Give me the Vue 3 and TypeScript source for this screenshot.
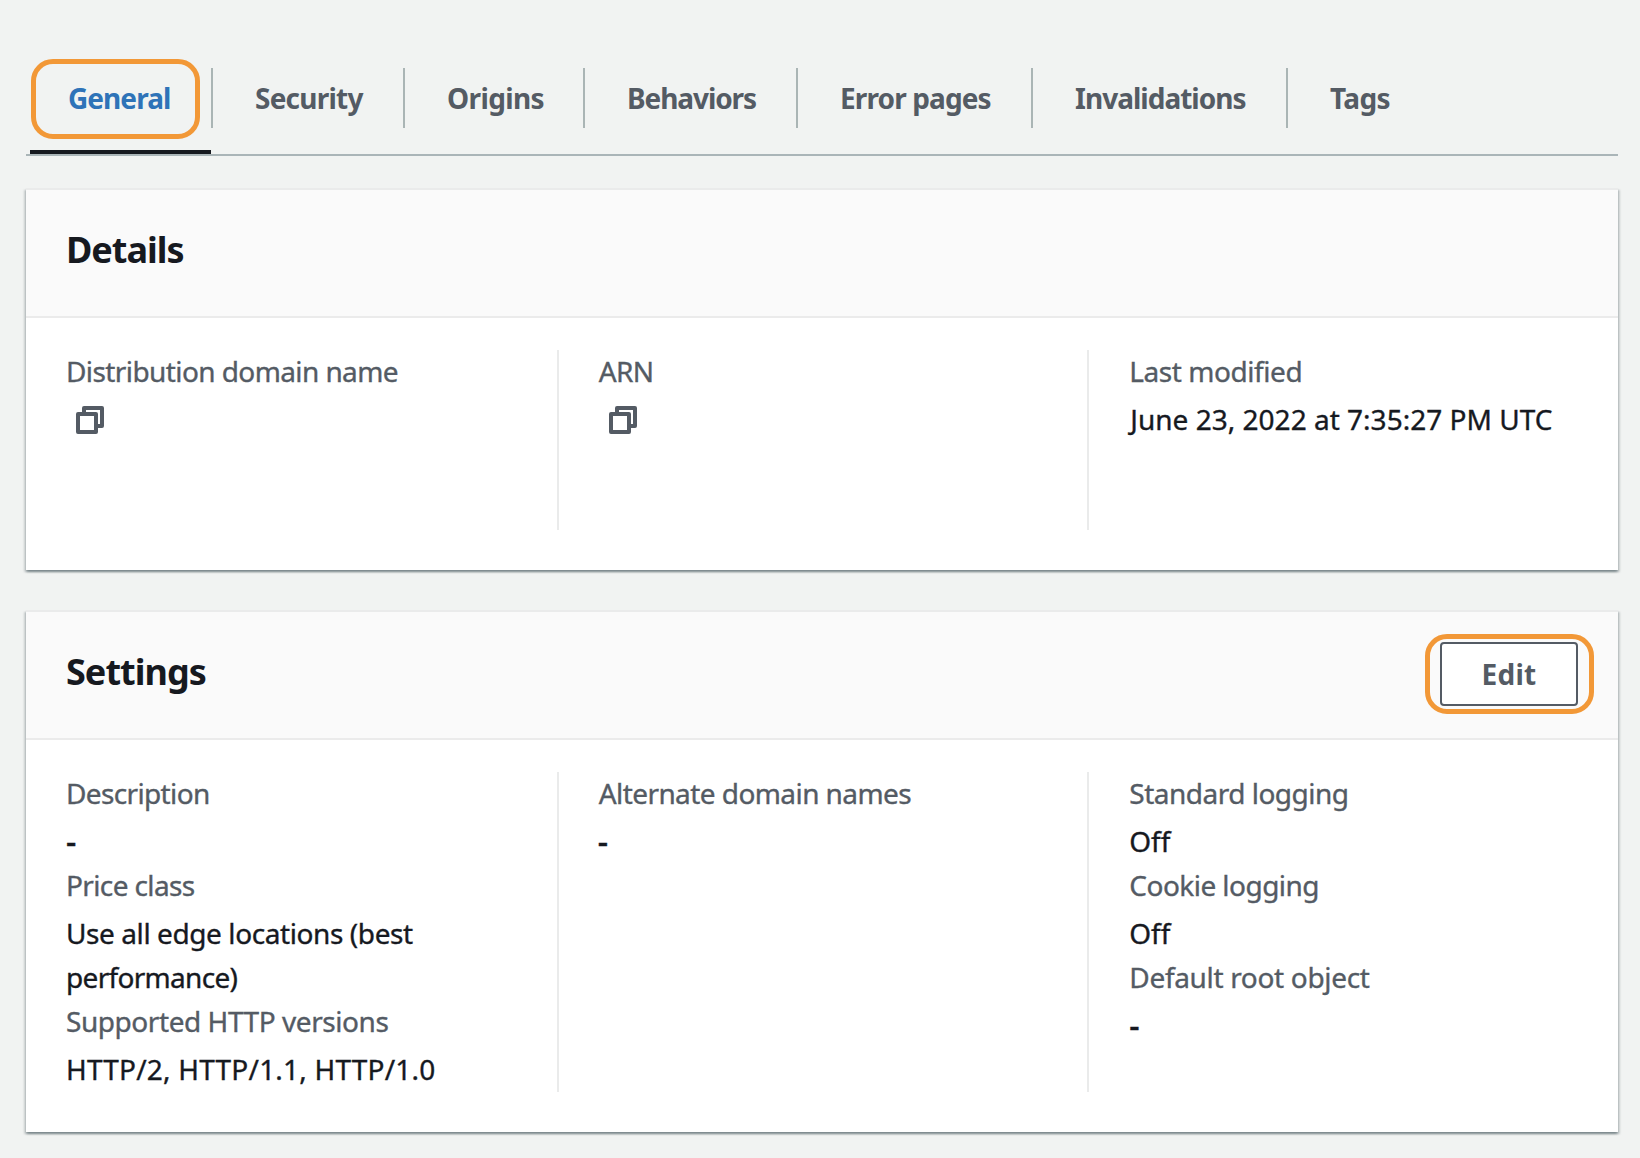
<script setup lang="ts">
interface Tab {
  label: string
  width: number
  tracking: number
}

interface Line {
  text: string
  tracking: number
  indent?: number
}

interface Field {
  label: Line
  value?: Line[]
  copy?: boolean
}

interface Panel {
  title: string
  tracking: number
  editable: boolean
  columns: Field[][]
}

const tabs: Tab[] = [
  { label: 'General', width: 183, tracking: -0.94 },
  { label: 'Security', width: 192, tracking: -0.76 },
  { label: 'Origins', width: 180, tracking: -0.63 },
  { label: 'Behaviors', width: 213, tracking: -1.08 },
  { label: 'Error pages', width: 235, tracking: -0.88 },
  { label: 'Invalidations', width: 255, tracking: -0.98 },
  { label: 'Tags', width: 160, tracking: -0.6 },
]

const dash: Line[] = [{ text: '-', tracking: 0 }]
const off: Line[] = [{ text: 'Off', tracking: -0.1 }]

const panels: Panel[] = [
  {
    title: 'Details',
    tracking: -1,
    editable: false,
    columns: [
      [{ label: { text: 'Distribution domain name', tracking: -0.59 }, copy: true }],
      [{ label: { text: 'ARN', tracking: -0.6, indent: 1 }, copy: true }],
      [
        {
          label: { text: 'Last modified', tracking: -0.44 },
          value: [{ text: 'June 23, 2022 at 7:35:27 PM UTC', tracking: 0.01, indent: 1 }],
        },
      ],
    ],
  },
  {
    title: 'Settings',
    tracking: -0.97,
    editable: true,
    columns: [
      [
        { label: { text: 'Description', tracking: -0.64 }, value: dash },
        {
          label: { text: 'Price class', tracking: -0.62 },
          value: [
            { text: 'Use all edge locations (best', tracking: -0.41 },
            { text: 'performance)', tracking: -0.69 },
          ],
        },
        {
          label: { text: 'Supported HTTP versions', tracking: -0.44 },
          value: [{ text: 'HTTP/2, HTTP/1.1, HTTP/1.0', tracking: 0.21 }],
        },
      ],
      [{ label: { text: 'Alternate domain names', tracking: -0.57, indent: 1 }, value: dash }],
      [
        { label: { text: 'Standard logging', tracking: -0.51 }, value: off },
        { label: { text: 'Cookie logging', tracking: -0.54 }, value: off },
        { label: { text: 'Default root object', tracking: -0.33 }, value: dash },
      ],
    ],
  },
]

const lineStyle = (line: Line) => ({
  letterSpacing: `${line.tracking}px`,
  textIndent: `${line.indent ?? 0}px`,
})
</script>

<template>
  <main class="page">
    <nav class="tabs">
      <a
        v-for="(tab, i) in tabs"
        :key="tab.label"
        class="tab"
        :class="{ active: i === 0 }"
        :style="{ width: `${tab.width}px`, letterSpacing: `${tab.tracking}px` }"
        >{{ tab.label }}</a
      >
    </nav>

    <section v-for="panel in panels" :key="panel.title" class="panel">
      <header class="panel-header">
        <h2 class="title" :style="{ letterSpacing: `${panel.tracking}px` }">{{ panel.title }}</h2>
        <button v-if="panel.editable" class="edit" type="button">Edit</button>
      </header>
      <div class="panel-body">
        <div v-for="(column, c) in panel.columns" :key="c" class="column">
          <div v-for="field in column" :key="field.label.text" class="field">
            <div class="line label" :style="lineStyle(field.label)">{{ field.label.text }}</div>
            <div class="value">
              <svg v-if="field.copy" class="copy" viewBox="0 0 28 28" width="28" height="28">
                <path d="M8 6V2H26V20H22" />
                <path d="M2 8H20V26H2Z" />
              </svg>
              <div
                v-for="line in field.value"
                :key="line.text"
                class="line"
                :class="{ empty: line.text === '-' }"
                :style="lineStyle(line)"
              >
                {{ line.text }}
              </div>
            </div>
          </div>
        </div>
      </div>
    </section>
  </main>
</template>

<style>
body {
  background: #f1f3f2;
}
</style>

<style scoped>
.page {
  box-sizing: border-box;
  width: 1640px;
  height: 1158px;
  padding: 56px 22px 0 26px;
  overflow: hidden;
  background: #f1f3f2;
  color: #16191f;
  font-family: 'Noto Sans', 'Open Sans', sans-serif;
  font-size: 28px;
}

.tabs {
  display: flex;
  box-sizing: border-box;
  height: 100px;
  padding: 12px 0 0 4px;
  margin-bottom: 32px;
  border-bottom: 2px solid #aab5b8;
}

.tab {
  position: relative;
  box-sizing: border-box;
  flex: none;
  height: 60px;
  padding-left: 42px;
  border-right: 2px solid #aab5b5;
  color: #545b64;
  font-weight: 700;
  line-height: 60px;
  white-space: nowrap;
}

.tab:last-child {
  border-right: 0;
}

.tab.active {
  padding-left: 38px;
  color: #2e73b8;
}

.tab.active::before {
  content: '';
  position: absolute;
  top: -9px;
  left: 1px;
  box-sizing: border-box;
  width: 169px;
  height: 80px;
  border: 5px solid #f29837;
  border-radius: 22px;
}

.tab.active::after {
  content: '';
  position: absolute;
  top: 82px;
  left: 0;
  right: 0;
  height: 4px;
  background: #16191f;
}

.panel {
  margin-bottom: 40px;
  border-top: 2px solid #eaebeb;
  background: #fff;
  box-shadow:
    0 2px 2px rgba(0, 28, 36, 0.3),
    2px 2px 2px rgba(0, 28, 36, 0.15),
    -2px 2px 2px rgba(0, 28, 36, 0.15);
}

.panel-header {
  display: flex;
  align-items: flex-start;
  justify-content: space-between;
  box-sizing: border-box;
  height: 128px;
  padding: 30px 40px 0;
  border-bottom: 2px solid #ebebeb;
  background: #fafafa;
}

.title {
  margin: 0;
  font-size: 36px;
  font-weight: 700;
  line-height: 60px;
}

.edit {
  position: relative;
  box-sizing: border-box;
  width: 138px;
  height: 64px;
  padding: 0 0 1px;
  border: 2px solid #545b64;
  border-radius: 4px;
  background: #fff;
  color: #545b64;
  font: inherit;
  font-weight: 700;
  letter-spacing: 0.25px;
}

.edit::after {
  content: '';
  position: absolute;
  inset: -10px -18px -10px -17px;
  border: 5px solid #f29837;
  border-radius: 22px;
}

.panel-body {
  display: grid;
  grid-template-columns: repeat(3, 1fr);
  padding: 32px 0 40px;
}

.column {
  min-height: 180px;
  padding-left: 40px;
}

.column + .column {
  padding-left: 39px;
  border-left: 2px solid #eaebeb;
}

.column:last-child {
  padding-left: 40px;
}

.line {
  height: 44px;
  line-height: 42px;
  white-space: nowrap;
  -webkit-text-stroke: 0.35px currentColor;
}

.label {
  color: #545b64;
}

.value {
  display: flow-root;
  margin-top: 4px;
}

.empty {
  font-size: 32px;
  font-weight: 500;
}

.copy {
  display: block;
  margin: 8px 0 8px 10px;
  fill: none;
  stroke: #545b64;
  stroke-width: 4;
  stroke-linejoin: round;
}

.column + .column .copy {
  margin-left: 11px;
}
</style>
